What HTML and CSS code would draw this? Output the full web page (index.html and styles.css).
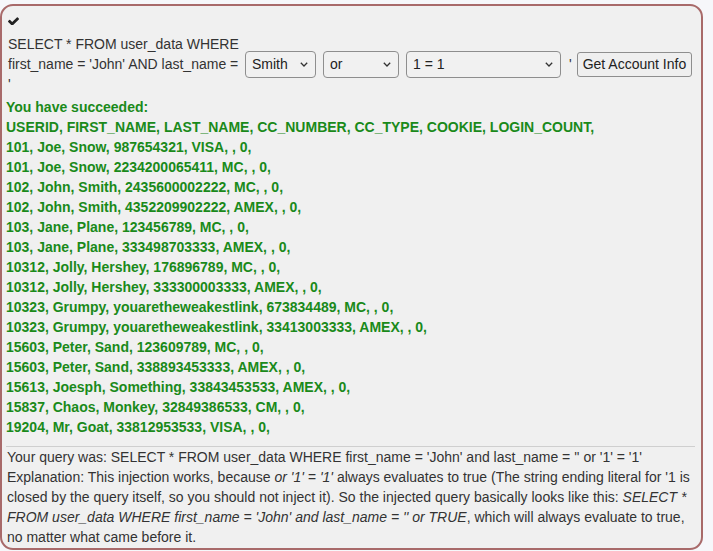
FILE: index.html
```html
<!DOCTYPE html>
<html>
<head>
<meta charset="utf-8">
<link rel="stylesheet" href="styles.css">
</head>
<body>
<div class="attack-container">
  <div class="check-row">
    <svg class="check" viewBox="121 302 1550 1120" width="11" height="8"><path fill="#222" d="M1671 566q0 40-28 68l-724 724-136 136q-28 28-68 28t-68-28l-136-136-362-362q-28-28-28-68t28-68l136-136q28-28 68-28t68 28l294 295 656-657q28-28 68-28t68 28l136 136q28 28 28 68z"/></svg>
  </div>
  <form class="attack-form">
    <div class="query-text">SELECT * FROM user_data WHERE first_name = 'John' AND last_name = '</div>
    <div class="select sel-1"><span>Smith</span><svg viewBox="0 0 8 5" width="8" height="5"><path d="M0.8 0.8 L4 4 L7.2 0.8" fill="none" stroke="#333" stroke-width="1.3"/></svg></div>
    <div class="select sel-2"><span>or</span><svg viewBox="0 0 8 5" width="8" height="5"><path d="M0.8 0.8 L4 4 L7.2 0.8" fill="none" stroke="#333" stroke-width="1.3"/></svg></div>
    <div class="select sel-3"><span>1 = 1</span><svg viewBox="0 0 8 5" width="8" height="5"><path d="M0.8 0.8 L4 4 L7.2 0.8" fill="none" stroke="#333" stroke-width="1.3"/></svg></div>
    <span class="quote">'</span>
    <button type="button" class="btn">Get Account Info</button>
  </form>
  <p class="feedback">You have succeeded:<br>USERID, FIRST_NAME, LAST_NAME, CC_NUMBER, CC_TYPE, COOKIE, LOGIN_COUNT, <br>101, Joe, Snow, 987654321, VISA, , 0, <br>101, Joe, Snow, 2234200065411, MC, , 0, <br>102, John, Smith, 2435600002222, MC, , 0, <br>102, John, Smith, 4352209902222, AMEX, , 0, <br>103, Jane, Plane, 123456789, MC, , 0, <br>103, Jane, Plane, 333498703333, AMEX, , 0, <br>10312, Jolly, Hershey, 176896789, MC, , 0, <br>10312, Jolly, Hershey, 333300003333, AMEX, , 0, <br>10323, Grumpy, youaretheweakestlink, 673834489, MC, , 0, <br>10323, Grumpy, youaretheweakestlink, 33413003333, AMEX, , 0, <br>15603, Peter, Sand, 123609789, MC, , 0, <br>15603, Peter, Sand, 338893453333, AMEX, , 0, <br>15613, Joesph, Something, 33843453533, AMEX, , 0, <br>15837, Chaos, Monkey, 32849386533, CM, , 0, <br>19204, Mr, Goat, 33812953533, VISA, , 0, </p>
  <hr class="divider">
  <p class="output">Your query was: SELECT * FROM user_data WHERE first_name = 'John' and last_name = '' or '1' = '1'<br>Explanation: This injection works, because <i>or '1' = '1'</i> always evaluates to true (The string ending literal for '1 is closed by the query itself, so you should not inject it). So the injected query basically looks like this: <i>SELECT * FROM user_data WHERE first_name = 'John' and last_name = '' or TRUE</i>, which will always evaluate to true, no matter what came before it.</p>
</div>
</body>
</html>
```

FILE: styles.css
```css
html, body {
  margin: 0;
  padding: 0;
  background: #f6f7fa;
  font-family: "Liberation Sans", Arial, sans-serif;
  font-size: 14px;
  line-height: 20px;
  color: #333;
}

.attack-container {
  margin: 4px 10px 0 0;
  border: 2px solid #a86a6a;
  border-radius: 13px;
  background: #f0f0f0;
  padding: 2px 4px 1px 4px;
  overflow: hidden;
}

.check-row {
  height: 26px;
  box-sizing: border-box;
  padding: 9px 0 0 2px;
  display: flex;
  align-items: flex-start;
}

.check {
  display: block;
}

.attack-form {
  display: flex;
  align-items: center;
  height: 60px;
  padding-left: 2px;
  margin: 0;
}

.query-text {
  width: 234px;
  flex: none;
}

.select {
  flex: none;
  box-sizing: border-box;
  height: 27px;
  border: 1px solid #8e8e8e;
  border-radius: 4px;
  background: #f1f1f1;
  display: flex;
  align-items: center;
  justify-content: space-between;
  padding: 0 7px 0 6px;
  margin-left: 7px;
  color: #222;
  font-size: 14px;
}

.select svg {
  display: block;
}

.sel-1 { width: 71px; margin-left: 3px; }
.sel-2 { width: 76px; }
.sel-3 { width: 155px; }

.quote {
  margin-left: 8px;
}

.btn {
  margin-left: 5px;
  height: 25px;
  box-sizing: border-box;
  border: 1px solid #8e8e8e;
  border-radius: 3px;
  background: #efefef;
  font-family: "Liberation Sans", Arial, sans-serif;
  font-size: 14px;
  color: #222;
  padding: 0 5px;
}

.feedback {
  margin: 3px 0 0 0;
  color: #1a8a1a;
  font-weight: bold;
}

.divider {
  margin: 9px 2px 0 0;
  border: 0;
  border-top: 1px solid #cfcfcf;
  height: 0;
}

.output {
  margin: 0;
  padding-left: 1px;
  color: #333;
}
```
